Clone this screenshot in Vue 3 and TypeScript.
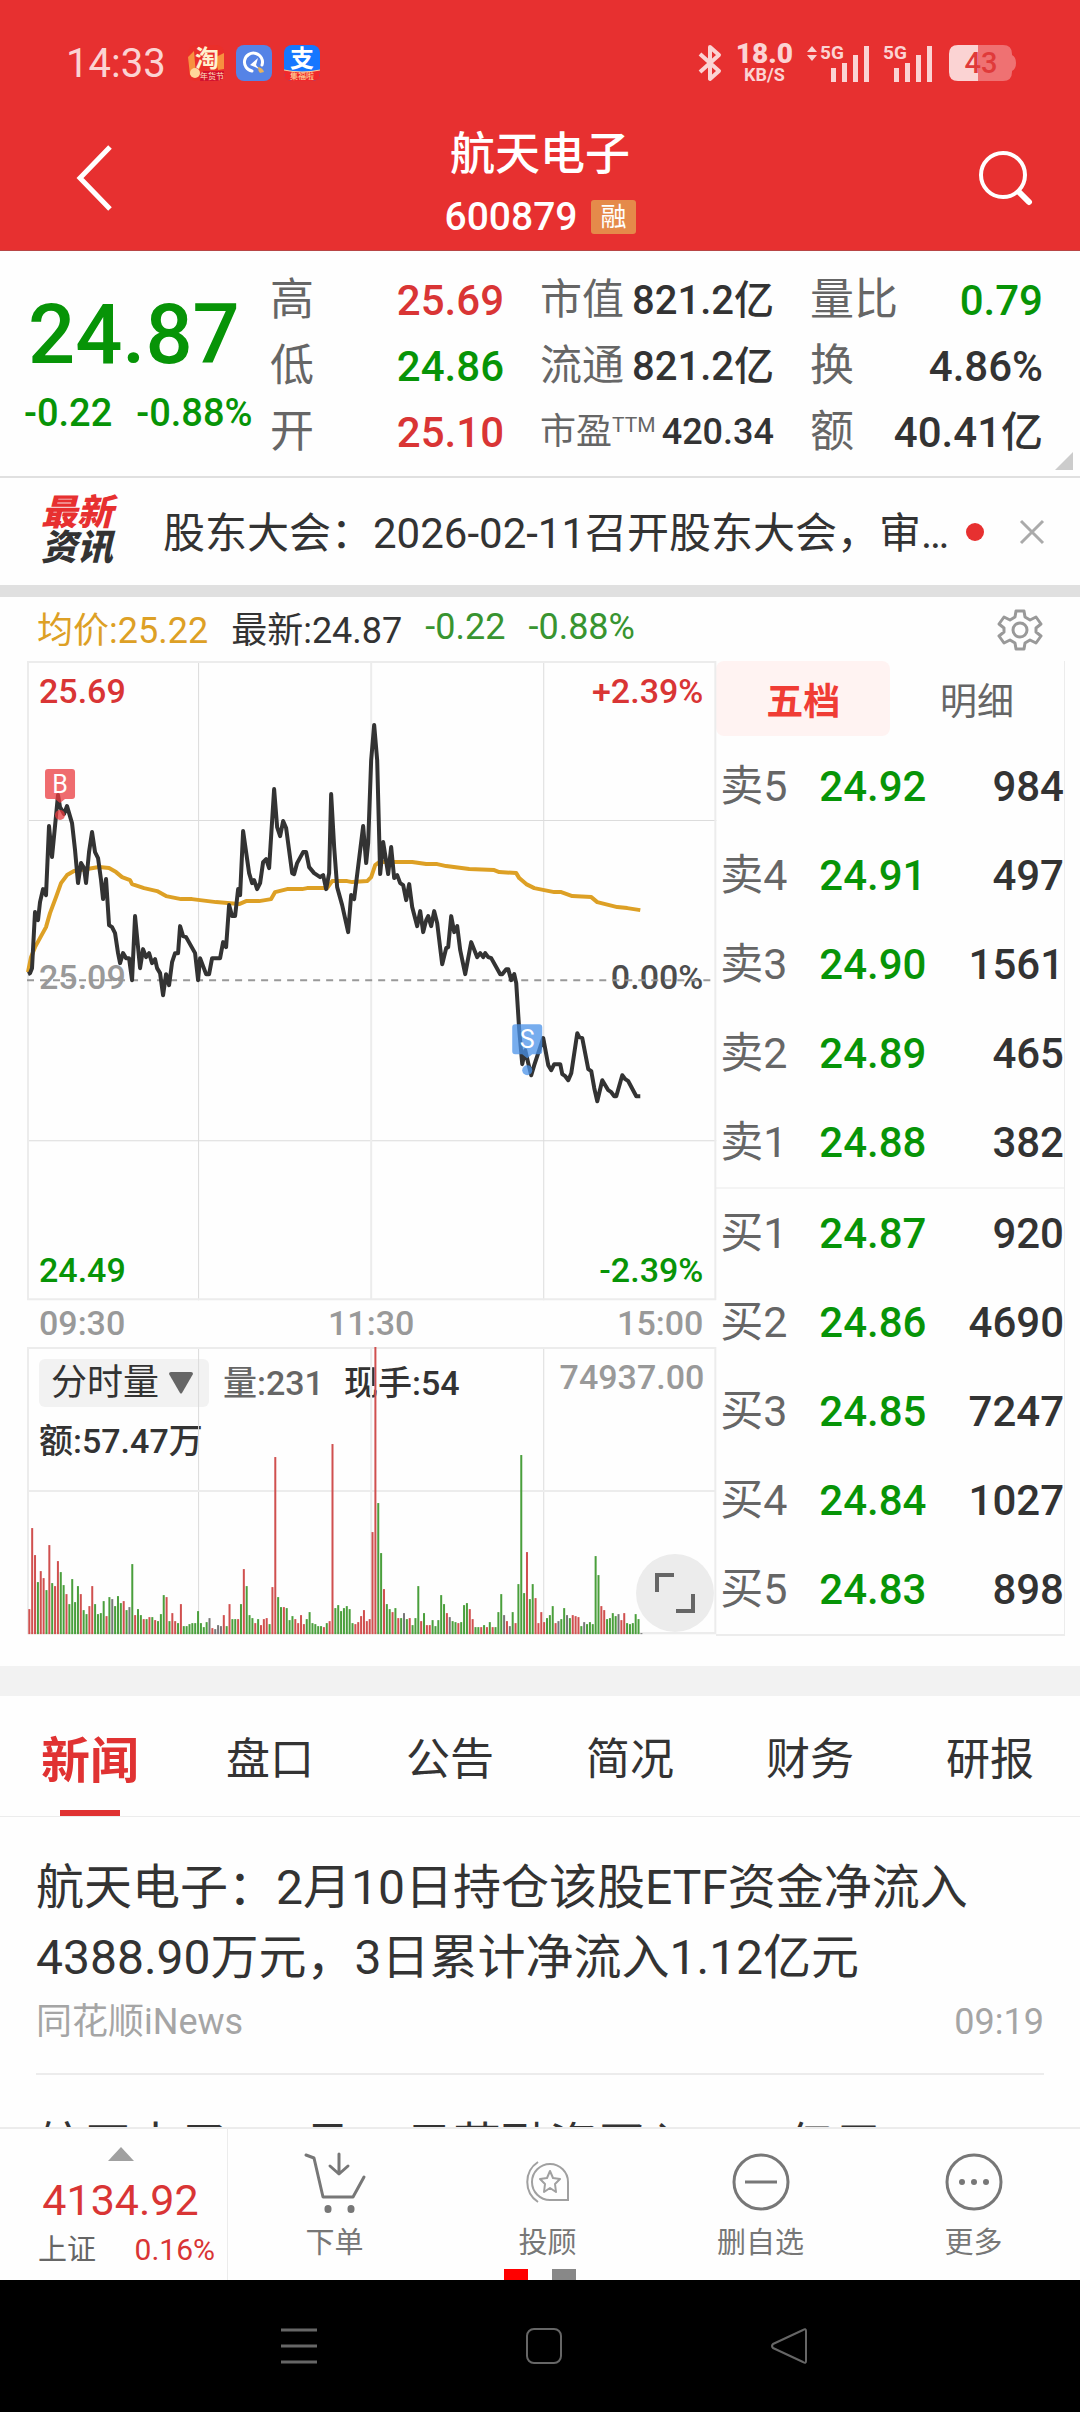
<script setup lang="ts">
import { ref } from 'vue'

type Tone = 'up' | 'down' | 'plain'

interface Metric {
  label: string
  value: string
  tone: Tone
  sup?: string
}

const metricColumns: { name: string; items: Metric[] }[] = [
  {
    name: 'prices',
    items: [
      { label: '高', value: '25.69', tone: 'up' },
      { label: '低', value: '24.86', tone: 'down' },
      { label: '开', value: '25.10', tone: 'up' },
    ],
  },
  {
    name: 'caps',
    items: [
      { label: '市值', value: '821.2亿', tone: 'plain' },
      { label: '流通', value: '821.2亿', tone: 'plain' },
      { label: '市盈', value: '420.34', tone: 'plain', sup: 'TTM' },
    ],
  },
  {
    name: 'ratios',
    items: [
      { label: '量比', value: '0.79', tone: 'down' },
      { label: '换', value: '4.86%', tone: 'plain' },
      { label: '额', value: '40.41亿', tone: 'plain' },
    ],
  },
]

const book = [
  { side: '卖5', price: '24.92', qty: 984 },
  { side: '卖4', price: '24.91', qty: 497 },
  { side: '卖3', price: '24.90', qty: 1561 },
  { side: '卖2', price: '24.89', qty: 465 },
  { side: '卖1', price: '24.88', qty: 382 },
  { side: '买1', price: '24.87', qty: 920 },
  { side: '买2', price: '24.86', qty: 4690 },
  { side: '买3', price: '24.85', qty: 7247 },
  { side: '买4', price: '24.84', qty: 1027 },
  { side: '买5', price: '24.83', qty: 898 },
]

const tabs = ['新闻', '盘口', '公告', '简况', '财务', '研报']
const activeTab = ref('新闻')
const indicator = ref('分时量')

// Intraday price, chart units
const priceLine =
  '1,313 3,312 5,307 8,251 11,259 13,241 16,228 19,234 22,165 25,196 31,134 33,146 37,153 40,145 45,162 48,189 51,222 54,202 57,207 59,222 62,191 65,171 68,191 71,197 74,219 76,238 79,218 82,264 85,266 88,272 91,292 93,302 96,292 99,297 102,297 105,319 108,255 113,307 116,288 119,296 122,292 125,302 128,298 130,307 133,312 136,334 139,313 142,324 145,301 148,292 151,292 153,265 156,275 159,276 168,292 171,319 173,297 179,313 182,313 185,297 193,297 196,281 199,286 202,244 205,255 208,255 211,228 213,234 216,170 222,212 225,222 227,219 230,228 233,222 236,201 239,198 242,207 247,128 250,166 253,175 256,160 259,167 265,212 267,213 270,202 276,191 279,191 282,206 287,212 293,216 296,214 299,228 302,212 304,133 307,186 310,226 315,244 321,271 324,234 327,238 336,165 339,202 341,182 344,99 347,64 350,99 353,213 356,181 361,213 364,186 367,217 370,214 373,222 376,224 379,239 382,223 385,246 390,265 393,250 396,271 399,259 401,255 404,265 407,250 410,262 413,287 415,303 419,287 421,286 424,255 427,271 430,265 433,289 438,313 444,281 450,296 453,292 456,296 458,292 461,296 464,297 473,313 475,313 479,308 481,308 484,319 487,313 489,322 492,369 495,403 498,389 501,402 504,414 507,404 516,377 521,404 524,409 527,403 533,403 535,413 538,415 541,419 544,412 550,372 552,376 555,377 561,408 564,410 567,427 570,440 575,419 581,429 584,431 587,435 589,435 595,414 598,418 601,420 609,435 613,435'

// Running average price
const averageLine =
  '1,311 4,296 8,286 19,266 23,252 29,236 34,222 40,214 47,210 60,208 72,206 82,207 89,211 95,216 103,219 105,223 117,227 130,230 139,235 154,238 165,238 189,241 212,243 219,240 232,240 244,238 248,231 260,228 275,228 280,227 300,227 305,220 320,220 325,221 340,220 344,216 348,204 352,201 385,201 399,203 410,203 419,205 442,208 467,209 472,211 489,212 492,217 499,223 507,227 527,231 534,231 545,235 564,236 570,241 590,246 600,247 613,249'

// One entry per minute: r = up, g = down, k = unchanged, followed by bar height
const volumeSeries =
  'r25 r106 r79 g52 r63 r56 g44 r89 g51 r48 r73 g62 g49 r40 g30 g55 g32 g48 r40 g24 g20 r28 r48 g30 g20 g21 g33 r18 g37 k35 g28 g38 g31 r33 g24 k27 g70 r19 g25 g19 r15 g15 r17 g17 r14 g13 g20 g39 r37 g13 r21 r13 g11 r30 g8 g8 g10 g11 g11 g23 g11 g7 g12 k16 r6 k5 k9 k8 r19 g8 r30 g15 g15 r15 g30 r65 g48 g19 g16 r11 g15 r9 r15 r16 g10 r47 r177 g37 g27 r27 g26 g14 g18 r15 r11 r19 r10 g15 g22 g11 g10 g8 g8 r7 g11 r13 r190 g26 g29 g23 g26 g28 g25 g11 r10 r12 r18 r24 r13 r15 r102 r287 g131 g81 r45 g30 g25 r22 g26 r16 g16 k21 g15 r16 g9 g16 g48 r13 g21 r9 r9 g14 g8 g14 g39 g30 r21 k17 g13 g12 r11 g12 g29 g31 r25 r15 g7 g7 r7 g9 r7 g12 r7 g7 g22 g40 k19 r13 k8 g22 r11 g50 g179 g41 r82 g35 g50 r36 r11 r22 r12 g16 g19 g28 r11 k13 g15 g26 k19 g16 r19 r18 r17 g8 k12 g10 g12 g10 g78 g59 r28 r24 g15 g16 g21 g18 k20 r14 r21 g11 g10 g11 g20 g15 k1'

const barColors: Record<string, string> = { r: '#d0504f', g: '#4a9f3c', k: '#777777' }
const minuteWidth = 689 / 241
const volumeBars = volumeSeries.split(' ').map((entry, i) => {
  const height = Number(entry.slice(1))
  return { x: 1.3 + i * minuteWidth, y: 287 - height, height, color: barColors[entry[0]] }
})
</script>

<template>
  <div class="screen">
    <header class="top">
      <div class="status">
        <span class="clock">14:33</span>
        <div class="apps">
          <svg width="36" height="36" viewBox="0 0 36 36">
            <rect width="36" height="36" rx="8" fill="#ea2f2a" />
            <path d="M0 12L6 6L8 30L2 30ZM28 12L36 8V24L30 25Z" fill="#f7913f" />
            <text x="19" y="22" font-size="24" font-weight="700" text-anchor="middle" fill="#fff1cf">淘</text>
            <path d="M14 26H36V28Q36 36 28 36H12Z" fill="#d3122e" />
            <text x="24" y="34" font-size="8" text-anchor="middle" fill="#ffe1c0">年货节</text>
            <circle cx="7" cy="28" r="5" fill="#ffd79a" />
          </svg>
          <svg width="36" height="36" viewBox="0 0 36 36">
            <rect width="36" height="36" rx="8" fill="#5583e6" />
            <path d="M16 26A9 9 0 1 1 26 20" fill="none" stroke="#fff" stroke-width="3" stroke-linecap="round" />
            <path d="M14 20L22 13L20 20L23 24L19 22Z" fill="#fff" />
            <path d="M22 22Q27 23 28 27L24 28Q22 26 22 22Z" fill="#e9b35c" />
          </svg>
          <svg width="36" height="36" viewBox="0 0 36 36">
            <rect width="36" height="36" rx="8" fill="#1677ff" />
            <text x="18" y="22" font-size="24" font-weight="700" text-anchor="middle" fill="#fff">支</text>
            <path d="M0 25Q18 29 36 25V28Q36 36 28 36H8Q0 36 0 28Z" fill="#f0282c" />
            <path d="M0 25Q18 29 36 25" fill="none" stroke="#ffcf9a" />
            <text x="18" y="34" font-size="8" text-anchor="middle" fill="#ffe1a0">集福啦</text>
          </svg>
        </div>
        <div class="signals">
          <svg width="24" height="38" viewBox="0 0 24 38" fill="none" stroke="#fbd3d3" stroke-width="4">
            <path d="M2 10L21 27L12 35V3L21 11L2 28" stroke-linejoin="round" />
          </svg>
          <div class="speed"><b>18.0</b><span>KB/S</span></div>
          <svg width="64" height="38" viewBox="0 0 64 38" fill="#fbd3d3">
            <path d="M0 8L5 2L10 8ZM0 11L5 17L10 11Z" />
            <text x="13" y="15" font-size="19" font-weight="700">5G</text>
            <path d="M24 24h5v14h-5zM35 19h5v19h-5zM46 11h5v27h-5zM57 2h5v36h-5z" />
          </svg>
          <svg width="50" height="38" viewBox="0 0 50 38" fill="#fbd3d3">
            <text x="-2" y="15" font-size="19" font-weight="700">5G</text>
            <path d="M9 24h5v14h-5zM20 19h5v19h-5zM31 11h5v27h-5zM42 2h5v36h-5z" />
          </svg>
          <svg width="68" height="36" viewBox="0 0 68 36">
            <path d="M29 0H54Q63 0 63 9V10Q67 12 67 18T63 26V27Q63 36 54 36H29Z" fill="#ef7172" />
            <path d="M29 0H9Q0 0 0 9V27Q0 36 9 36H29Z" fill="#fbd3d3" />
            <text x="32" y="28" font-size="29" font-weight="500" text-anchor="middle" fill="#e03a3a">43</text>
          </svg>
        </div>
      </div>
      <div class="titlebar">
        <button class="iconbtn" aria-label="返回">
          <svg width="36" height="66" viewBox="0 0 36 66" fill="none" stroke="#fff" stroke-width="5">
            <path d="M34 2L4 33L34 64" />
          </svg>
        </button>
        <div class="names">
          <h1>航天电子</h1>
          <div class="code">600879 <span class="badge">融</span></div>
        </div>
        <button class="iconbtn" aria-label="搜索">
          <svg width="56" height="58" viewBox="0 0 56 58" fill="none" stroke="#fff">
            <circle cx="25" cy="26" r="22" stroke-width="4" />
            <path d="M41 43L51 53" stroke-width="6" stroke-linecap="round" />
          </svg>
        </button>
      </div>
    </header>

    <main>
      <section class="quote">
        <div class="last">
          <div class="big">24.87</div>
          <div class="delta"><span>-0.22</span><span>-0.88%</span></div>
        </div>
        <dl v-for="col in metricColumns" :key="col.name" :class="['metrics', col.name]">
          <div v-for="m in col.items" :key="m.label" :class="{ compact: m.sup }">
            <dt>{{ m.label }}<sup v-if="m.sup">{{ m.sup }}</sup></dt>
            <dd :class="m.tone">{{ m.value }}</dd>
          </div>
        </dl>
        <i class="corner"></i>
      </section>

      <section class="ticker">
        <div class="flash"><span>最新</span><span>资讯</span></div>
        <a href="#">股东大会：2026-02-11召开股东大会，审议相关议案</a>
        <i class="dot"></i>
        <button class="iconbtn" aria-label="关闭">
          <svg width="24" height="24" viewBox="0 0 24 24" stroke="#aaa" stroke-width="3">
            <path d="M1 1L23 23M23 1L1 23" />
          </svg>
        </button>
      </section>

      <section class="trend">
        <div class="legend">
          <span class="avg">均价:25.22</span>
          <span>最新:24.87</span>
          <span class="fall">-0.22</span>
          <span class="fall">-0.88%</span>
          <button class="iconbtn gear" aria-label="设置">
            <svg width="46" height="42" viewBox="0 0 46 42" fill="none" stroke="#999" stroke-width="3" stroke-linejoin="round">
              <path d="M19 2H27L28 8L33 11L39 8L44 15L39 19V23L44 27L39 34L33 31L28 34L27 40H19L18 34L13 31L7 34L2 27L7 23V19L2 15L7 8L13 11L18 8Z" />
              <circle cx="23" cy="21" r="7" />
            </svg>
          </button>
        </div>

        <div class="panes">
          <div class="charts">
            <div class="stack">
              <div class="scale">
                <div class="up"><span>25.69</span><span>+2.39%</span></div>
                <div class="mid"><span>25.09</span><span>0.00%</span></div>
                <div class="down"><span>24.49</span><span>-2.39%</span></div>
              </div>
              <svg class="plot" viewBox="0 0 689 639" fill="none">
                <path d="M171.500 0V639M516.500 0V639M0 159.500H689M0 479.500H689" stroke="#dcdcdc" />
                <path d="M344 0V639M1 1H688V638H1Z" stroke="#ececec" stroke-width="2" />
                <path d="M0 319H689" stroke="#999" stroke-width="2" stroke-dasharray="7 6" />
                <polyline :points="averageLine" stroke="#dda025" stroke-width="4" stroke-linejoin="round" />
                <polyline :points="priceLine" stroke="#333" stroke-width="4" stroke-linejoin="round" />
                <g fill="#e93b3f" fill-opacity="0.75">
                  <path d="M21 108H45Q48 108 48 111V135Q48 138 45 138H38L33 142L28 138H21Q18 138 18 135V111Q18 108 21 108Z" />
                  <circle cx="33" cy="154" r="5" />
                </g>
                <text x="33" y="132" font-size="25" text-anchor="middle" fill="#fff">B</text>
                <g fill="#4a92e8" fill-opacity="0.75">
                  <path d="M488 363H512Q515 363 515 366V390Q515 393 512 393H505L500 397L495 393H488Q485 393 485 390V366Q485 363 488 363Z" />
                  <circle cx="500" cy="409" r="5" />
                </g>
                <text x="500" y="387" font-size="25" text-anchor="middle" fill="#fff">S</text>
              </svg>
            </div>
            <div class="times"><span>09:30</span><span>11:30</span><span>15:00</span></div>
            <div class="stack">
              <div class="volinfo">
                <div class="volrow">
                  <label class="picker">
                    <select v-model="indicator" aria-label="指标">
                      <option>分时量</option>
                    </select>
                    <svg width="24" height="22" viewBox="0 0 24 22"><path d="M0 2Q0 0 2 0H22Q24 0 24 2L13 21Q12 22 11 21Z" fill="#666" /></svg>
                  </label>
                  <span class="vol">量:231</span>
                  <span>现手:54</span>
                  <span class="max">74937.00</span>
                </div>
                <div class="amount">额:57.47万</div>
              </div>
              <svg class="plot" viewBox="0 0 689 287" fill="none">
                <path d="M171.500 0V287M516.500 0V287" stroke="#dcdcdc" />
                <path d="M344 0V287M0 144H689M1 1H688V286H1Z" stroke="#ececec" stroke-width="2" />
                <rect v-for="(b, i) in volumeBars" :key="i" :x="b.x" :y="b.y" width="2" :height="b.height" :fill="b.color" />
              </svg>
              <button class="expand" aria-label="全屏">
                <svg width="42" height="42" viewBox="0 0 42 42" fill="none" stroke="#666" stroke-width="4">
                  <path d="M3 20V3H20M39 22V39H22" />
                </svg>
              </button>
            </div>
          </div>

          <div class="book">
            <div class="booktabs">
              <button class="on">五档</button>
              <button>明细</button>
            </div>
            <table>
              <tbody>
                <tr v-for="row in book" :key="row.side">
                  <th scope="row">{{ row.side }}</th>
                  <td class="price">{{ row.price }}</td>
                  <td class="qty">{{ row.qty }}</td>
                </tr>
              </tbody>
            </table>
          </div>
        </div>
      </section>

      <nav class="tabs">
        <button v-for="t in tabs" :key="t" :class="{ on: t === activeTab }" @click="activeTab = t">{{ t }}</button>
      </nav>

      <section class="news">
        <article>
          <a href="#">航天电子：2月10日持仓该股ETF资金净流入4388.90万元，3日累计净流入1.12亿元</a>
          <p><span>同花顺iNews</span><time>09:19</time></p>
        </article>
        <article>
          <a href="#">航天电子：2月10日获融资买入1.58亿元</a>
        </article>
      </section>
    </main>

    <footer class="dock">
      <a class="index" href="#">
        <i class="tri"></i>
        <b>4134.92</b>
        <span class="sub"><span>上证</span><em>0.16%</em></span>
      </a>
      <button>
        <svg width="62" height="60" viewBox="0 0 62 60" fill="none" stroke="#777" stroke-width="3" stroke-linecap="round" stroke-linejoin="round">
          <path d="M2 3L10 6L19 45H49L60 25M35 2V20M26 14L35 22L44 14" />
          <path d="M24 56.500V57.500M47 56.500V57.500" stroke-width="7" />
        </svg>
        <span>下单</span>
      </button>
      <button>
        <svg width="60" height="60" viewBox="0 0 60 60" fill="none" stroke="#a0a0a0" stroke-width="2">
          <path d="M32 12A18 18 0 1 0 32 48H50V30A18 18 0 0 0 32 12Z" />
          <path d="M20 10A24 24 0 0 0 20 50" />
          <path d="M32 19L35 26L42 27L37 32L38 40L32 36L26 40L27 32L22 27L29 26Z" stroke-linejoin="round" />
        </svg>
        <span>投顾</span>
      </button>
      <button>
        <svg width="60" height="60" viewBox="0 0 60 60" fill="none" stroke="#777" stroke-width="3">
          <circle cx="30" cy="30" r="27" /><path d="M14 30H46" />
        </svg>
        <span>删自选</span>
      </button>
      <button>
        <svg width="60" height="60" viewBox="0 0 60 60" fill="none" stroke="#777" stroke-width="3">
          <circle cx="30" cy="30" r="27" />
          <g fill="#777" stroke="none"><circle cx="18" cy="30" r="3" /><circle cx="30" cy="30" r="3" /><circle cx="42" cy="30" r="3" /></g>
        </svg>
        <span>更多</span>
      </button>
      <div class="pager"><i class="on"></i><i></i></div>
    </footer>

    <nav class="system">
      <button aria-label="最近任务">
        <svg width="36" height="36" viewBox="0 0 36 36" stroke="#666" stroke-width="3"><path d="M0 2H36M0 18H36M0 34H36" /></svg>
      </button>
      <button aria-label="主屏幕">
        <svg width="36" height="36" viewBox="0 0 36 36" fill="none" stroke="#666" stroke-width="2"><rect x="1" y="1" width="34" height="34" rx="7" /></svg>
      </button>
      <button aria-label="返回上一级">
        <svg width="36" height="36" viewBox="0 0 36 36" fill="none" stroke="#666" stroke-width="2" stroke-linejoin="round"><path d="M35 3V33Q35 36 32 34L2 20Q0 18 2 16L32 2Q35 0 35 3Z" /></svg>
      </button>
    </nav>
  </div>
</template>

<style>
body {
  background: #fff;
}
</style>

<style scoped>
* {
  box-sizing: border-box;
  margin: 0;
}
.screen {
  display: flex;
  flex-direction: column;
  height: 100vh;
  overflow: hidden;
  background: #fefefe;
  color: #333;
  font-family: Roboto, 'Noto Sans CJK SC', sans-serif;
  font-size: 36px;
}
button,
select {
  border: 0;
  padding: 0;
  background: none;
  font: inherit;
  color: inherit;
}
a {
  color: inherit;
  text-decoration: none;
}
svg {
  display: block;
  overflow: visible;
}
.up {
  color: #d93535;
}
.down {
  color: #079407;
}

/* header */
.top {
  flex: none;
  background: #e73030;
  color: #fff;
  border-bottom: 1px solid #b84545;
}
.status {
  display: flex;
  align-items: center;
  padding: 36px 63px 0 66px;
  height: 90px;
}
.clock {
  font-size: 40px;
  color: #fbd3d3;
}
.apps {
  display: flex;
  gap: 12px;
  margin-left: 22px;
}
.signals {
  display: flex;
  align-items: center;
  gap: 14px;
  margin-left: auto;
}
.speed {
  display: flex;
  flex-direction: column;
  align-items: center;
  color: #fbd3d3;
  font-size: 18px;
  line-height: 18px;
  font-weight: 700;
}
.speed b {
  font-size: 28px;
  line-height: 24px;
}
.titlebar {
  display: flex;
  align-items: center;
  justify-content: space-between;
  height: 160px;
  padding: 16px 42px 0 76px;
}
.titlebar .iconbtn {
  width: 60px;
}
.names {
  align-self: flex-start;
  padding: 16px 34px 0 0;
  text-align: center;
}
h1 {
  font-size: 45px;
  line-height: 66px;
  font-weight: 500;
}
.code {
  display: flex;
  align-items: center;
  justify-content: center;
  gap: 14px;
  font-size: 39px;
  line-height: 58px;
  font-weight: 500;
}
.badge {
  padding: 0 9px;
  border-radius: 3px;
  background: #e58a4a;
  font-size: 26px;
  line-height: 34px;
  font-weight: 400;
}

main {
  flex: 1;
  min-height: 0;
  overflow: hidden;
}

/* quote */
.quote {
  position: relative;
  display: flex;
  height: 227px;
  padding: 16px 37px 0 24px;
  border-bottom: 2px solid #e0e0e0;
}
.last {
  width: 246px;
  color: #079407;
  font-weight: 500;
}
.big {
  padding: 16px 0 0 4px;
  font-size: 83px;
  line-height: 104px;
}
.delta {
  display: flex;
  gap: 24px;
  font-size: 38px;
  line-height: 52px;
}
.metrics > div {
  display: flex;
  justify-content: space-between;
  align-items: baseline;
  height: 66px;
  font-size: 44px;
  line-height: 66px;
}
.metrics dt {
  color: #666;
  white-space: nowrap;
}
.metrics dd {
  font-size: 42px;
  font-weight: 500;
}
.prices {
  width: 234px;
}
.caps {
  width: 234px;
  margin-left: 36px;
}
.metrics.caps > div {
  font-size: 42px;
}
.caps dd {
  font-size: 40px;
}
.ratios {
  flex: 1;
  margin-left: 36px;
}
.metrics.caps .compact,
.metrics .compact dd {
  font-size: 36px;
}
sup {
  font-size: 21px;
  line-height: 0;
  vertical-align: 12px;
}
.corner {
  position: absolute;
  right: 7px;
  bottom: 6px;
  border: 9px solid transparent;
  border-right-color: #ccc;
  border-bottom-color: #ccc;
}

/* ticker */
.ticker {
  display: flex;
  align-items: center;
  height: 107px;
  padding: 0 36px 0 41px;
}
.flash {
  display: flex;
  flex-direction: column;
  width: 122px;
  padding-bottom: 2px;
  color: #333;
  font-size: 36px;
  font-weight: 900;
  font-style: italic;
  line-height: 35px;
}
.flash span:first-child {
  color: #e73030;
}
.ticker a {
  flex: 1;
  min-width: 0;
  padding-bottom: 4px;
  overflow: hidden;
  text-overflow: ellipsis;
  white-space: nowrap;
  font-size: 42px;
}
.dot {
  width: 18px;
  height: 18px;
  margin: 0 36px 0 14px;
  border-radius: 50%;
  background: #e73030;
}

/* trend */
.trend {
  border-top: 12px solid #e0e0e0;
  border-bottom: 30px solid #f2f2f2;
  padding: 0 15px 30px 27px;
}
.legend {
  display: flex;
  align-items: center;
  gap: 23px;
  height: 64px;
  padding: 0 22px 4px 10px;
  font-size: 36px;
}
.legend .avg {
  color: #dda025;
}
.legend .fall {
  color: #389430;
}
.gear {
  margin: 6px 0 0 auto;
}
.panes {
  display: flex;
}
.charts {
  flex: 690;
  min-width: 0;
}
.book {
  flex: 348;
  min-width: 0;
  border-right: 1px solid #ececec;
  border-bottom: 2px solid #ececec;
}
.stack {
  display: grid;
  position: relative;
}
.stack > * {
  grid-area: 1 / 1;
}
.plot {
  width: 100%;
  height: auto;
  pointer-events: none;
  z-index: 1;
}
.scale {
  display: flex;
  flex-direction: column;
  justify-content: space-between;
  padding: 10px 13px 10px 12px;
  font-size: 34px;
  line-height: 40px;
  font-weight: 500;
}
.scale div {
  display: flex;
  justify-content: space-between;
}
.scale .mid {
  padding-bottom: 8px;
  color: #4d4d4d;
}
.scale .mid span:first-child {
  color: #999;
}
.times {
  display: flex;
  justify-content: space-between;
  padding: 0 13px 0 12px;
  color: #999;
  font-size: 34px;
  line-height: 47px;
  font-weight: 500;
}
.volinfo {
  padding: 12px 12px 0 12px;
  font-size: 34px;
  font-weight: 500;
}
.volrow {
  display: flex;
  align-items: center;
  gap: 20px;
  height: 48px;
  line-height: 44px;
}
.picker {
  display: flex;
  align-items: center;
  width: 170px;
  height: 48px;
  margin-right: -6px;
  padding: 0 16px 0 12px;
  border-radius: 6px;
  background: #f2f2f2;
}
.picker select {
  flex: 1;
  min-width: 0;
  appearance: none;
  font-size: 36px;
  font-weight: 400;
}
.vol {
  color: #666;
}
.max {
  align-self: flex-start;
  margin-left: auto;
  color: #999;
  line-height: 36px;
}
.amount {
  line-height: 68px;
}
.expand {
  display: grid;
  place-items: center;
  place-self: end;
  width: 78px;
  height: 78px;
  margin: 0 2px 2px 0;
  border-radius: 50%;
  background: #ececec;
  z-index: 2;
}

/* order book */
.booktabs {
  display: flex;
  margin-bottom: 6px;
}
.booktabs button {
  flex: 1;
  height: 75px;
  border-radius: 8px;
  font-size: 37px;
  color: #666;
}
.booktabs .on {
  background: #fff3f2;
  color: #f03c35;
  font-weight: 700;
}
table {
  width: 100%;
  border-collapse: collapse;
  font-size: 42px;
  line-height: 89px;
}
tr {
  height: 89px;
}
tr:nth-child(6) {
  border-top: 2px solid #f4f4f4;
}
th,
td {
  padding: 0;
  font-weight: 500;
  vertical-align: baseline;
}
th {
  width: 103px;
  padding-left: 4px;
  text-align: left;
  color: #666;
  font-size: 43px;
  font-weight: 400;
}
.price {
  color: #079407;
}
.qty {
  text-align: right;
}

/* tabs */
.tabs {
  display: flex;
  border-bottom: 1px solid #ececec;
}
.tabs button {
  position: relative;
  flex: 1;
  height: 120px;
  font-size: 44px;
}
.tabs .on {
  color: #e03232;
  font-size: 49px;
  font-weight: 700;
}
.tabs .on::after {
  content: '';
  position: absolute;
  left: 60px;
  right: 60px;
  bottom: 0;
  height: 6px;
  background: #e03232;
}

/* news */
.news {
  padding: 0 36px;
}
article {
  padding: 36px 0 25px;
  border-bottom: 2px solid #ececec;
}
article a {
  display: block;
  font-size: 48px;
  line-height: 70px;
}
article p {
  display: flex;
  justify-content: space-between;
  padding-top: 3px;
  line-height: 52px;
  color: #a5a5a5;
}

/* dock */
.dock {
  position: relative;
  flex: none;
  display: flex;
  height: 153px;
  border-top: 2px solid #ececec;
  background: #fefefe;
}
.dock > a {
  width: 228px;
  border-right: 1px solid #ececec;
}
.index {
  display: flex;
  flex-direction: column;
  align-items: center;
  padding: 18px 12px 0 26px;
  color: #d93535;
}
.tri {
  border: solid transparent;
  border-width: 0 13px 14px;
  border-bottom-color: #a0a0a0;
}
.index b {
  padding-top: 11px;
  font-size: 43px;
  line-height: 56px;
  font-weight: 400;
}
.sub {
  display: flex;
  justify-content: space-between;
  align-self: stretch;
  padding-left: 12px;
  font-size: 30px;
  line-height: 44px;
}
.sub span {
  color: #666;
  font-size: 29px;
}
.sub em {
  font-style: normal;
}
.dock button {
  flex: 1;
  display: flex;
  flex-direction: column;
  align-items: center;
  gap: 9px;
  padding-top: 23px;
  color: #777;
  font-size: 29px;
  line-height: 44px;
}
.pager {
  position: absolute;
  left: 0;
  right: 0;
  bottom: 0;
  display: flex;
  justify-content: center;
  gap: 24px;
}
.pager i {
  width: 24px;
  height: 11px;
  background: #888;
}
.pager .on {
  background: #f00;
}

.system {
  flex: none;
  display: flex;
  align-items: center;
  justify-content: center;
  gap: 209px;
  height: 132px;
  padding-left: 8px;
  background: #000;
}
</style>
